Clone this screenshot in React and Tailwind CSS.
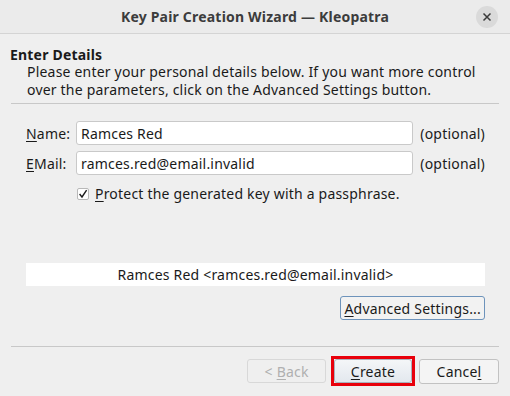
import React from "react";

function Mn({ children }) {
  return <span className="underline underline-offset-2 decoration-1">{children}</span>;
}

export default function App() {
  return (
    <div
      className="w-[510px] h-[396px] bg-[#efefef] text-[14px] leading-[17px] tracking-[0.2px] text-[#1a1a1a] flex flex-col overflow-hidden"
      style={{ fontFamily: '"Noto Sans", "Open Sans", sans-serif' }}
    >
      {/* Title bar */}
      <div className="h-[34px] shrink-0 bg-[#ebebeb] border-b border-[#d4d4d4] flex items-center px-[12px]">
        <div className="w-[22px]" />
        <div className="flex-1 text-center font-bold text-[14px] tracking-[0.2px] text-[#3c3c3c]">
          Key Pair Creation Wizard — Kleopatra
        </div>
        <div className="w-[22px] h-[22px] rounded-full bg-[#dadada] flex items-center justify-center">
          <svg width="10" height="10" viewBox="0 0 10 10">
            <path d="M1.5 1.5 L8.5 8.5 M8.5 1.5 L1.5 8.5" stroke="#3a3a3a" strokeWidth="1.5" />
          </svg>
        </div>
      </div>

      {/* Body */}
      <div className="flex flex-col px-[11px] pt-[12px]">
        <div className="font-bold -ml-px">Enter Details</div>
        <div className="pl-[16px] leading-[18px]">
          <div>Please enter your personal details below. If you want more control</div>
          <div>over the parameters, click on the Advanced Settings button.</div>
        </div>
        <div className="mt-[4px] h-px bg-[#c8c8c8]" />

        <div className="pl-[15px] pr-[14px] mt-[17px] flex flex-col gap-[6px]">
          <div className="flex items-center">
            <div className="w-[50px]">
              <Mn>N</Mn>ame:
            </div>
            <div className="flex-1 h-[24px] bg-white border border-[#c9c9c9] rounded-[3px] flex items-center px-[4px]">
              Ramces Red
            </div>
            <div className="ml-[7px]">(optional)</div>
          </div>
          <div className="flex items-center">
            <div className="w-[50px]">
              <Mn>E</Mn>Mail:
            </div>
            <div className="flex-1 h-[24px] bg-white border border-[#c9c9c9] rounded-[3px] flex items-center px-[4px]">
              ramces.red@email.invalid
            </div>
            <div className="ml-[7px]">(optional)</div>
          </div>
          <div className="flex items-center mt-[4px] pl-[51px]">
            <div className="w-[12px] h-[12px] bg-white border border-[#b8b8b8] rounded-[2px] flex items-center justify-center">
              <svg width="10" height="10" viewBox="0 0 10 10">
                <path d="M1.6 5 L4 8 L8.6 1.2" stroke="#1c1c1c" strokeWidth="1.4" fill="none" />
              </svg>
            </div>
            <div className="ml-[6px]">
              <Mn>P</Mn>rotect the generated key with a passphrase.
            </div>
          </div>
        </div>

        <div className="mt-[61px] ml-[15px] mr-[14px] h-[23px] bg-white flex items-center justify-center">
          Ramces Red &lt;ramces.red@email.invalid&gt;
        </div>

        <div className="mt-[10px] flex justify-end pr-[14px]">
          <div className="h-[24px] px-[3px] border border-[#6d93bb] rounded-[3px] bg-[#f2f2f2] flex items-center">
            <Mn>A</Mn>dvanced Settings...
          </div>
        </div>

        <div className="mt-[26px] h-px bg-[#c8c8c8]" />

        <div className="mt-[9px] flex justify-end items-center">
          <div className="w-[79px] h-[24px] border border-[#d8d8d8] rounded-[3px] bg-[#efefef] text-[#b0b0b0] flex items-center justify-center">
            &lt; <span className="ml-[4px]"><Mn>B</Mn>ack</span>
          </div>
          <div className="ml-[5px] border-[3px] border-[#e8000b] p-0">
            <div className="w-[78px] h-[24px] border border-[#a8b2bd] rounded-[3px] bg-gradient-to-b from-[#f4f6f8] to-[#e3e8ee] flex items-center justify-center">
              <Mn>C</Mn>reate
            </div>
          </div>
          <div className="ml-[4px] w-[80px] h-[25px] border border-[#c2c2c2] rounded-[3px] bg-[#f4f4f4] flex items-center justify-center">
            Cance<Mn>l</Mn>
          </div>
        </div>
      </div>
    </div>
  );
}
